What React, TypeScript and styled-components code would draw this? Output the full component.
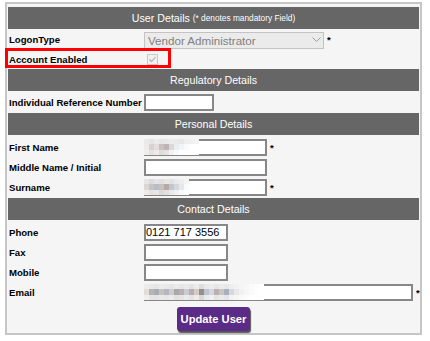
import styled, { createGlobalStyle } from "styled-components";

const GlobalStyle = createGlobalStyle`
  body {
    margin: 0;
    background: #fff;
    font-family: "Liberation Sans", Arial, sans-serif;
  }
`;

const Page = styled.div`
  padding: 2px 0 0 5px;
`;

const Panel = styled.form`
  box-sizing: border-box;
  width: 417px;
  border: 2px solid #c6c6c6;
  background: #f5f5f5;
  padding: 3px 1px 1px;
  display: flex;
  flex-direction: column;
`;

const SectionHeader = styled.div`
  height: 22px;
  background: #666;
  color: #fff;
  font-size: 10.67px;
  display: flex;
  align-items: center;
  justify-content: center;
  white-space: pre;
`;

const Note = styled.span`
  font-size: 8.3px;
`;

const SectionBody = styled.div<{ $top?: number; $bottom?: number }>`
  padding: ${(p) => p.$top ?? 0}px 0 ${(p) => p.$bottom ?? 0}px;
`;

const Row = styled.div<{ $h?: number }>`
  position: relative;
  display: grid;
  grid-template-columns: 136px 1fr;
  align-items: center;
  height: ${(p) => p.$h ?? 20}px;
`;

const Label = styled.label`
  font-size: 9.6px;
  font-weight: bold;
  color: #000;
  padding-left: 1px;
  white-space: nowrap;
`;

const Field = styled.div`
  display: flex;
  align-items: center;
`;

const FieldWrap = styled.div`
  position: relative;
  display: flex;
`;

const TextInput = styled.input<{ $w: number }>`
  box-sizing: border-box;
  width: ${(p) => p.$w}px;
  height: 17px;
  margin: 0;
  border: 2px solid #878787;
  background: #fff;
  padding: 0 1px 0 0;
  font: 11px "Liberation Sans", Arial, sans-serif;
  color: #000;
  outline: none;
`;

const Req = styled.span`
  font-size: 9.6px;
  font-weight: bold;
  color: #000;
  margin-left: 3px;
`;

const SelectWrap = styled.div`
  position: relative;
  width: 180px;
  height: 17px;
`;

const Select = styled.select`
  appearance: none;
  box-sizing: border-box;
  width: 100%;
  height: 100%;
  margin: 0;
  border: 1px solid #c3c3c3;
  border-radius: 0;
  background: #ebebeb;
  color: #808080;
  font: 11.6px "Liberation Sans", Arial, sans-serif;
  padding: 0 0 0 3px;
  opacity: 1;
`;

const Chevron = styled.svg`
  position: absolute;
  right: 3px;
  top: 6px;
  pointer-events: none;
`;

const CheckBox = styled.span`
  box-sizing: border-box;
  display: inline-flex;
  align-items: center;
  justify-content: center;
  width: 11px;
  height: 11px;
  margin-left: 3px;
  border: 1px solid #c9c9c9;
  background: #f1f1f1;
`;

const Highlight = styled.div`
  position: absolute;
  left: -3px;
  top: -1px;
  width: 166px;
  height: 20px;
  box-sizing: border-box;
  border: 3px solid #ff0000;
  pointer-events: none;
`;

const Mosaic = styled.div<{ $cols: number }>`
  position: absolute;
  left: 0;
  top: 0;
  display: grid;
  grid-template-columns: repeat(${(p) => p.$cols}, 5px);
  grid-auto-rows: 5.5px;
  pointer-events: none;
`;

const ButtonRow = styled.div`
  display: flex;
  justify-content: center;
  padding: 5px 0 1px;
`;

const Button = styled.button`
  height: 24px;
  padding: 0 3.5px;
  border: none;
  border-radius: 3px;
  background: #5b2c87;
  color: #fff;
  font: bold 11.2px "Liberation Sans", Arial, sans-serif;
  box-shadow: 1px 2px 1px rgba(0, 0, 0, 0.65);
`;

const firstNameCells = [
  ["#e9e9e9", "#e4e4e4", "#ebebeb", "#e6e6e6", "#e8e8e8", "#ececec", "#eaeaea", "#e7e7e7", "#efefef", "#f0f0f0", "#f2f2f2"],
  ["#ecebea", "#d9d2cf", "#e3dedc", "#c9c0bf", "#bdb5b5", "#dcd8d8", "#e8eef2", "#f4f4f4", "#fafafa", "#fff", "#fff"],
  ["#f0efee", "#e6e2e0", "#ecebea", "#e0dcdb", "#e4e2e2", "#f2f2f2", "#fafafa", "#fff", "#fff", "#fff", "#fff"],
];

const surnameCells = [
  ["#e6e6e6", "#dcdcdc", "#e4e4e4", "#e0e0e0", "#e6e6e6", "#e2e2e2", "#e9e9e9", "#ededed", "#f3f3f3"],
  ["#dcd6d4", "#c7c3c6", "#b9bcc6", "#c9bfbd", "#b4aaa8", "#c3c6cf", "#d5d7dc", "#e6e8ec", "#fafafa"],
  ["#efecea", "#e2e4e8", "#ebe6e4", "#dcd9dc", "#e4e0de", "#e8eaee", "#f2f2f2", "#fafafa", "#fff"],
];

const emailCells = [
  ["#ececec", "#e8e8e8", "#e6e6e6", "#ebebeb", "#e9e9e9", "#e5e5e5", "#ebebeb", "#e6e6e6", "#e9e9e9", "#e4e4e4", "#ebebeb", "#dedede", "#e9e9e9", "#ececec", "#e6e6e6", "#ebebeb", "#e8e8e8", "#eeeeee", "#f2f2f2", "#f5f5f5", "#f7f7f7", "#fafafa", "#fdfdfd", "#fff"],
  ["#e2dcdb", "#b8b4b6", "#a9abb3", "#c8c3c1", "#b2b7c2", "#cfcbca", "#aaa8ab", "#b9b1ae", "#c9ccd3", "#b6b0ae", "#d1cbc9", "#958f89", "#c0c4cc", "#d3d6dc", "#b7b2b1", "#c9c5c3", "#a9afbb", "#d6d8de", "#e9e9eb", "#f1f1f1", "#f6f6f6", "#fafafa", "#fdfdfd", "#fff"],
  ["#f1efee", "#e6e5e6", "#e2e4e8", "#ebe8e7", "#e4e6ea", "#edebea", "#e2e1e2", "#e8e4e2", "#eaebee", "#e5e2e1", "#eeebea", "#dad8d6", "#e8eaee", "#eff0f2", "#e6e4e4", "#eceae9", "#e3e5ea", "#f1f2f4", "#f6f6f6", "#fafafa", "#fcfcfc", "#fff", "#fff", "#fff"],
];

function Redacted({ cells }: { cells: string[][] }) {
  return (
    <Mosaic $cols={cells[0].length} aria-hidden>
      {cells.flatMap((row, r) =>
        row.map((c, i) => <span key={`${r}-${i}`} style={{ background: c }} />)
      )}
    </Mosaic>
  );
}

function App() {
  return (
    <Page>
      <GlobalStyle />
      <Panel onSubmit={(e) => e.preventDefault()}>
        <SectionHeader>
          User Details <Note>(* denotes mandatory Field)</Note>
        </SectionHeader>
        <SectionBody>
          <Row>
            <Label>LogonType</Label>
            <Field>
              <SelectWrap>
                <Select disabled defaultValue="va">
                  <option value="va">Vendor Administrator</option>
                </Select>
                <Chevron width="9" height="6" viewBox="0 0 9 6">
                  <polyline points="0.5,0.5 4.5,4.5 8.5,0.5" fill="none" stroke="#9c9c9c" strokeWidth="1" />
                </Chevron>
              </SelectWrap>
              <Req>*</Req>
            </Field>
          </Row>
          <Row>
            <Highlight />
            <Label>Account Enabled</Label>
            <Field>
              <CheckBox role="checkbox" aria-checked="true" aria-disabled="true">
                <svg width="9" height="9" viewBox="0 0 9 9">
                  <polyline points="1.5,4.5 3.5,6.5 7.5,2" fill="none" stroke="#a9a9a9" strokeWidth="1.1" />
                </svg>
              </CheckBox>
            </Field>
          </Row>
        </SectionBody>

        <SectionHeader>Regulatory Details</SectionHeader>
        <SectionBody>
          <Row $h={22}>
            <Label>Individual Reference Number</Label>
            <Field>
              <TextInput $w={70} />
            </Field>
          </Row>
        </SectionBody>

        <SectionHeader>Personal Details</SectionHeader>
        <SectionBody $top={2} $bottom={1}>
          <Row>
            <Label>First Name</Label>
            <Field>
              <FieldWrap>
                <TextInput $w={123} />
                <Redacted cells={firstNameCells} />
              </FieldWrap>
              <Req>*</Req>
            </Field>
          </Row>
          <Row>
            <Label>Middle Name / Initial</Label>
            <Field>
              <TextInput $w={123} />
            </Field>
          </Row>
          <Row>
            <Label>Surname</Label>
            <Field>
              <FieldWrap>
                <TextInput $w={123} />
                <Redacted cells={surnameCells} />
              </FieldWrap>
              <Req>*</Req>
            </Field>
          </Row>
        </SectionBody>

        <SectionHeader>Contact Details</SectionHeader>
        <SectionBody $top={2}>
          <Row>
            <Label>Phone</Label>
            <Field>
              <TextInput $w={84} defaultValue="0121 717 3556" />
            </Field>
          </Row>
          <Row>
            <Label>Fax</Label>
            <Field>
              <TextInput $w={84} />
            </Field>
          </Row>
          <Row>
            <Label>Mobile</Label>
            <Field>
              <TextInput $w={84} />
            </Field>
          </Row>
          <Row>
            <Label>Email</Label>
            <Field>
              <FieldWrap>
                <TextInput $w={269} />
                <Redacted cells={emailCells} />
              </FieldWrap>
              <Req>*</Req>
            </Field>
          </Row>
        </SectionBody>
        <ButtonRow>
          <Button type="submit">Update User</Button>
        </ButtonRow>
      </Panel>
    </Page>
  );
}

export default App;
